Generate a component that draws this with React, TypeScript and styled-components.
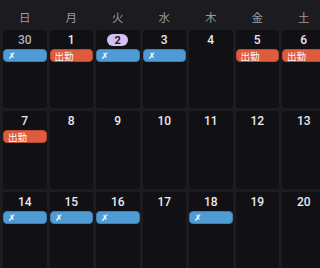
import React from "react";
import styled, { createGlobalStyle } from "styled-components";

type EventKind = "work" | "off";

interface Day {
  date: number;
  outside?: boolean;
  today?: boolean;
  event?: EventKind;
}

const GlobalStyle = createGlobalStyle`
  html, body {
    margin: 0;
    padding: 0;
    background: #1c1b1f;
    overflow: hidden;
  }
  body {
    font-family: Roboto, "Noto Sans CJK JP", sans-serif;
  }
`;

const WEEKDAYS = ["日", "月", "火", "水", "木", "金", "土"];

const weeks: Day[][] = [
  [
    { date: 30, outside: true, event: "off" },
    { date: 1, event: "work" },
    { date: 2, today: true, event: "off" },
    { date: 3, event: "off" },
    { date: 4 },
    { date: 5, event: "work" },
    { date: 6, event: "work" },
  ],
  [
    { date: 7, event: "work" },
    { date: 8 },
    { date: 9 },
    { date: 10 },
    { date: 11 },
    { date: 12 },
    { date: 13 },
  ],
  [
    { date: 14, event: "off" },
    { date: 15, event: "off" },
    { date: 16, event: "off" },
    { date: 17 },
    { date: 18, event: "off" },
    { date: 19 },
    { date: 20 },
  ],
];

const DayCell = ({ day }: { day: Day }) => {
  return (
    <Cell>
      <NumberRow>
        {day.today ? (
          <TodayPill>{day.date}</TodayPill>
        ) : (
          <DateNum $outside={day.outside}>{day.date}</DateNum>
        )}
      </NumberRow>
      {day.event === "work" && <EventBar $kind="work">出勤</EventBar>}
      {day.event === "off" && <EventBar $kind="off">✗</EventBar>}
    </Cell>
  );
};

const App = () => {
  return (
    <>
      <GlobalStyle />
      <Calendar>
        <HeaderRow>
          {WEEKDAYS.map((w) => (
            <Weekday key={w}>{w}</Weekday>
          ))}
        </HeaderRow>
        <Grid>
          {weeks.flat().map((d, i) => (
            <DayCell key={i} day={d} />
          ))}
        </Grid>
      </Calendar>
    </>
  );
};

export default App;

const Calendar = styled.div`
  display: flex;
  flex-direction: column;
  padding-left: 3px;
  width: 330px;
`;

const HeaderRow = styled.div`
  display: grid;
  grid-template-columns: repeat(7, 43.5px);
  column-gap: 3px;
  height: 30px;
  align-items: center;
`;

const Weekday = styled.div`
  text-align: center;
  font-size: 11.5px;
  color: #9c9aa1;
  padding-top: 3px;
  font-family: "Noto Sans CJK JP", sans-serif;
`;

const Grid = styled.div`
  display: grid;
  grid-template-columns: repeat(7, 43.5px);
  grid-auto-rows: 78px;
  gap: 3px;
`;

const Cell = styled.div`
  display: flex;
  flex-direction: column;
  background: #111014;
  border-radius: 3px;
`;

const NumberRow = styled.div`
  display: flex;
  justify-content: center;
  align-items: center;
  height: 14px;
  margin-top: 3px;
  margin-bottom: 2px;
`;

const DateNum = styled.span<{ $outside?: boolean }>`
  font-size: 12px;
  font-weight: 500;
  color: ${(p) => (p.$outside ? "#b3b1b7" : "#ebe9ee")};
`;

const TodayPill = styled.span`
  display: inline-flex;
  justify-content: center;
  align-items: center;
  width: 21px;
  height: 12px;
  border-radius: 6px;
  background: #d3c1f2;
  color: #1d1a22;
  font-size: 11px;
  font-weight: 700;
`;

const EventBar = styled.div<{ $kind: EventKind }>`
  height: 13px;
  box-sizing: border-box;
  border-radius: 4px;
  padding-left: 4px;
  display: flex;
  align-items: center;
  font-size: ${(p) => (p.$kind === "work" ? "9.5px" : "9px")};
  color: #ffffff;
  font-family: "Noto Sans CJK JP", sans-serif;
  background: ${(p) => (p.$kind === "work" ? "#df5b3e" : "#4f9bd5")};
  border: 1px solid ${(p) => (p.$kind === "work" ? "#b84a34" : "#3f7fb0")};
`;
